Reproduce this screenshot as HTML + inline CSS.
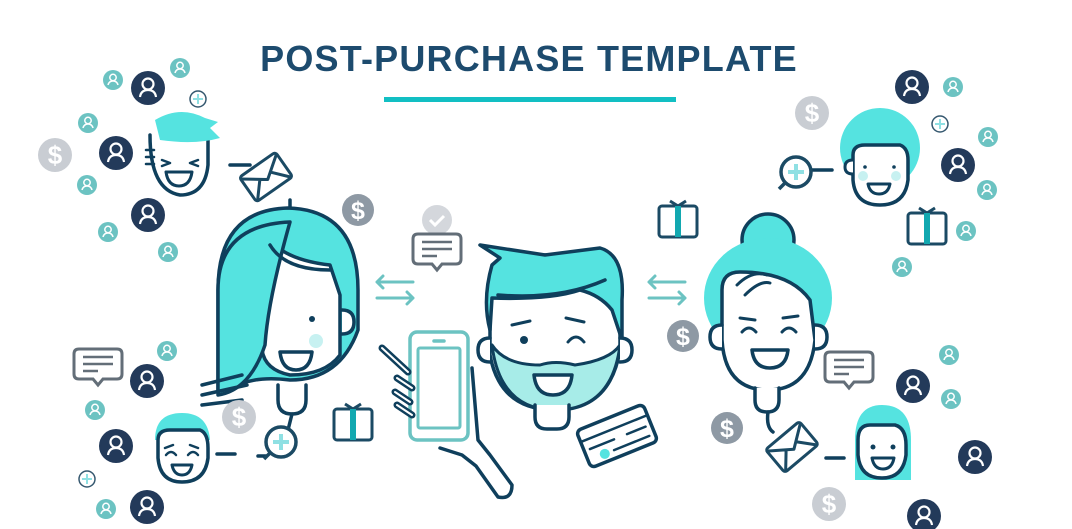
<!DOCTYPE html>
<html><head><meta charset="utf-8"><style>
html,body{margin:0;padding:0;background:#fff;width:1072px;height:529px;overflow:hidden}
.t{position:absolute;left:0;width:1058px;top:38px;text-align:center;font:bold 36px "Liberation Sans",sans-serif;color:#1d4b6e;letter-spacing:1.2px}
.u{position:absolute;left:384px;top:97px;width:292px;height:5px;background:#12bfc3}
svg{position:absolute;left:0;top:0}
</style></head><body>
<div class="t">POST-PURCHASE TEMPLATE</div><div class="u"></div>
<svg width="1072" height="529" viewBox="0 0 1072 529">
<defs>
<g id="du"><circle r="17" fill="#233a5a"/><circle cy="-4" r="5.5" fill="none" stroke="#fff" stroke-width="2.2"/><path d="M-8 9 Q-7 2 0 2 Q7 2 8 9" fill="none" stroke="#fff" stroke-width="2.2"/></g>
<g id="tu"><circle r="10" fill="#6cc3c2"/><circle cy="-2.5" r="3.2" fill="none" stroke="#fff" stroke-width="1.5"/><path d="M-5 5 Q-4 1 0 1 Q4 1 5 5" fill="none" stroke="#fff" stroke-width="1.5"/></g>
<g id="pl"><circle r="8" fill="#fff" stroke="#35586f" stroke-width="1.5"/><path d="M-5 0H5M0 -5V5" stroke="#8fe0e3" stroke-width="2"/></g>
<g id="dl"><circle r="17" fill="#c9cdd3"/><text y="9" text-anchor="middle" font-family="Liberation Sans" font-weight="bold" font-size="26" fill="#fff">$</text></g>
<g id="dd"><circle r="16" fill="#8e99a4"/><text y="9" text-anchor="middle" font-family="Liberation Sans" font-weight="bold" font-size="25" fill="#fff">$</text></g>
<g id="gf" fill="none" stroke="#1b4a64" stroke-width="3"><path d="M-8 -16 L0 -11 L8 -16" /><rect x="-19" y="-11" width="38" height="31" rx="3"/><rect x="-3" y="-11" width="6" height="31" fill="#12a8b0" stroke="none"/></g>
<g id="ch" fill="#fff" stroke="#636e78" stroke-width="3"><path d="M-19 -16H19Q24 -16 24 -11V9Q24 14 19 14H5L0 20L-5 14H-19Q-24 14 -24 9V-11Q-24 -16 -19 -16Z"/><path d="M-15 -8H15M-15 -1H15M-15 6H0" stroke-width="2.5"/></g>
<g id="ev" fill="#fff" stroke="#1b4a64" stroke-width="3" stroke-linejoin="round"><rect x="-22" y="-15" width="44" height="30" rx="3"/><path d="M-22 -13L0 3L22 -13M-20 14L-6 -2M20 14L6 -2"/></g>
<g id="ar" fill="none" stroke="#6cc3c2" stroke-width="3" stroke-linecap="round"><path d="M-18 -8H18M-18 -8L-12 -14M-18 -8L-12 -2M-18 8H18M18 8L12 2M18 8L12 14"/></g>
<g id="mg" fill="#fff" stroke="#1b4a64" stroke-width="3.5"><circle r="15"/><path d="M-10 10L-17 17"/><path d="M-8 0H8M0 -8V8" stroke="#8fe0e3" stroke-width="4"/></g>
</defs>
<g fill="none" stroke="#0f3f5c" stroke-width="3.5" stroke-linecap="round" stroke-linejoin="round">
<!-- top-left guy -->
<path d="M150 135 Q150 190 180 195 Q205 195 208 165 L208 130" fill="#fff"/>
<path d="M155 120 Q180 105 205 118 L218 122 L210 128 L220 138 Q195 145 160 140 Z" fill="#55e3e0" stroke="none"/>
<path d="M146 150h8M146 157h8M146 164h8" stroke-width="2.5"/>
<path d="M162 160l8 3-8 3M198 160l-8 3 8 3" stroke-width="2.5"/>
<path d="M166 172h26q-2 14 -13 14q-11 0 -13 -14z" stroke-width="3"/>
<path d="M230 165h20"/>
<!-- woman bob -->
<path d="M290 200 v12"/>
<path d="M218 290 Q218 210 288 208 Q358 210 358 290 V330 Q340 380 290 380 Q250 375 230 390 L218 390 Z" fill="#55e3e0"/>
<path d="M262 255 Q262 240 268 238 Q285 260 330 265 L340 295 V355 Q325 375 290 375 Q265 370 262 350 Z" fill="#fff"/>
<path d="M342 310 q12 0 12 12 q0 12 -12 12" fill="#fff"/>
<path d="M290 222 Q268 300 265 345 Q250 390 218 395 L218 290 Q218 225 290 222Z" fill="#55e3e0"/>
<path d="M270 245 Q285 270 330 270" />
<circle cx="312" cy="319" r="3" fill="#0f3f5c" stroke="none"/>
<circle cx="316" cy="341" r="7" fill="#c7f1f1" stroke="none"/>
<path d="M280 352h32q-2 18 -16 18q-14 0 -16 -18z" fill="#fff"/>
<path d="M202 385 l40 -10 M202 395 l45 -10 M202 405 l40 -5"/>
<path d="M278 385 v15 q0 14 14 14 q14 0 14 -14 v-15" fill="#fff"/>
<path d="M292 414 l-5 20"/>
<!-- bearded man arm -->
<path d="M472 368 L478 440 L490 455 L512 485 Q512 500 498 497 L476 466 L462 455 L440 448" fill="#fff"/>
<path d="M490 300 Q490 255 540 255 L590 255 Q620 260 620 300 V350 Q610 410 555 410 Q500 410 490 355 Z" fill="#fff"/>
<path d="M492 345 Q500 410 555 410 Q612 410 620 345 Q610 360 575 365 Q555 360 540 365 Q505 365 492 345Z" fill="#a7ece8" stroke-width="3"/>
<path d="M480 245 L545 255 L600 248 Q625 255 622 300 L622 340 L612 310 Q600 295 580 290 Q550 300 492 298 L490 330 Q482 300 492 265 L500 258 Z" fill="#55e3e0"/>
<path d="M498 295 Q560 300 605 280"/>
<path d="M490 338 q-12 0 -12 12 q0 12 12 12 M620 338 q12 0 12 12 q0 12 -12 12" fill="#fff"/>
<path d="M512 325 l18 -4 M566 318 l18 4" stroke-width="3"/>
<circle cx="524" cy="340" r="4" fill="#0f3f5c" stroke="none"/>
<path d="M568 342 q8 -10 16 0" stroke-width="3"/>
<path d="M534 375h38q-2 20 -19 20q-17 0 -19 -20z" fill="#fff"/>
<path d="M535 405 v12 q0 12 12 12 h10 q12 0 12 -12 v-12" fill="#fff"/>
<rect x="410" y="332" width="58" height="108" rx="7" fill="#fff" stroke="#6cc3c2"/>
<rect x="418" y="348" width="42" height="80" rx="2" fill="#fff" stroke="#6cc3c2" stroke-width="3"/>
<path d="M434 341h10" stroke="#6cc3c2"/>
<path d="M382 348 L408 372 M397 378 l15 10 M395 392 l15 10 M397 405 l15 10" stroke-width="7" stroke="#0f3f5c"/>
<path d="M382 348 L408 372 M397 378 l15 10 M395 392 l15 10 M397 405 l15 10" stroke-width="2" stroke="#fff"/>
<!-- credit card -->
<g transform="translate(617 436) rotate(-22)"><rect x="-36" y="-20" width="72" height="40" rx="5" fill="#fff"/><path d="M-36 -8H36M-30 2H-4M10 2H30M-8 12H30" stroke-width="2.5"/><circle cx="-18" cy="12" r="5" fill="#55e3e0" stroke="none"/></g>
<!-- bun woman -->
<circle cx="768" cy="240" r="26" fill="#55e3e0"/>
<ellipse cx="768" cy="298" rx="64" ry="60" fill="#55e3e0" stroke="none"/>
<path d="M722 290 Q722 272 740 272 Q790 272 810 300 L815 340 Q810 390 768 390 Q725 390 722 340 Z" fill="#fff"/>
<path d="M722 325 q-12 0 -12 12 q0 12 12 12 M815 325 q12 0 12 12 q0 12 -12 12" fill="#fff"/>
<path d="M737 285 q15 -15 30 -10 M745 295 q15 -15 25 -12" stroke-width="3"/>
<path d="M740 318 l15 2 M783 318 l15 -2 M742 332 q7 -8 14 0 M782 332 q7 -8 14 0" stroke-width="3"/>
<path d="M752 350h36q-2 18 -18 18q-16 0 -18 -18z" fill="#fff"/>
<path d="M755 388 v12 q0 12 12 12 q12 0 12 -12 v-12" fill="#fff"/>
<path d="M768 412 q-2 15 5 20"/>
<!-- top right -->
<circle cx="880" cy="148" r="40" fill="#55e3e0" stroke="none"/>
<path d="M853 155 Q853 145 865 145 L900 145 Q908 148 908 160 V180 Q905 205 880 205 Q855 205 853 180 Z" fill="#fff"/>
<path d="M853 160 q-8 0 -8 7 q0 7 8 7" fill="#fff" stroke-width="3"/>
<circle cx="863" cy="176" r="5" fill="#c7f1f1" stroke="none"/><circle cx="896" cy="176" r="5" fill="#c7f1f1" stroke="none"/>
<circle cx="865" cy="167" r="1.8" fill="#0f3f5c" stroke="none"/><circle cx="894" cy="167" r="1.8" fill="#0f3f5c" stroke="none"/>
<path d="M868 184h22q-2 10 -11 10q-9 0 -11 -10z" stroke-width="3"/>
<path d="M812 170 h20"/>
<!-- bottom right -->
<path d="M855 440 Q855 405 882 405 Q911 405 911 440 V480 H855Z" fill="#55e3e0" stroke="none"/>
<path d="M858 440 Q858 425 870 425 L895 425 Q906 428 906 445 V455 Q903 478 882 478 Q860 478 858 455Z" fill="#fff"/>
<circle cx="873" cy="447" r="2.5" fill="#0f3f5c" stroke="none"/><circle cx="893" cy="447" r="2.5" fill="#0f3f5c" stroke="none"/>
<path d="M872 458h22q-2 11 -11 11q-9 0 -11 -11z" stroke-width="3"/>
<path d="M826 458 h18"/>
<!-- bottom left -->
<path d="M155 440 Q155 413 182 413 Q208 413 210 440Z" fill="#55e3e0" stroke="none"/>
<path d="M158 440 Q158 430 170 430 L200 430 Q208 433 208 448 V458 Q205 482 182 482 Q160 482 158 458Z" fill="#fff"/>
<path d="M165 448 l8 -3 M198 448 l-8 -3 M166 455 q5 -6 10 0 M188 455 q5 -6 10 0" stroke-width="2.5"/>
<path d="M172 465h20q-2 10 -10 10q-8 0 -10 -10z" stroke-width="3"/>
<path d="M217 454 h18 M258 456 h8"/>
</g>
<use href="#ev" transform="translate(266 177) rotate(-35)"/>
<use href="#ev" transform="translate(792 447) rotate(-40)"/>
<use href="#mg" x="281" y="442"/>
<use href="#mg" x="796" y="172"/>
<use href="#ar" x="395" y="290"/><use href="#ar" x="667" y="290"/>
<circle cx="437" cy="220" r="15" fill="#c9cdd3" opacity=".8"/><path d="M430 220l5 5 9 -9" stroke="#fff" stroke-width="3" fill="none"/>
<use href="#ch" x="437" y="250"/><use href="#ch" x="98" y="365"/><use href="#ch" x="849" y="368"/>
<use href="#gf" x="678" y="217"/><use href="#gf" x="927" y="224"/><use href="#gf" x="353" y="420"/>
<use href="#dl" x="55" y="155"/><use href="#dd" x="358" y="210"/><use href="#dl" x="239" y="417"/><use href="#dd" x="683" y="336"/><use href="#dd" x="727" y="428"/><use href="#dl" x="812" y="113"/><use href="#dl" x="829" y="504"/>
<use href="#du" x="148" y="88"/><use href="#du" x="116" y="153"/><use href="#du" x="148" y="215"/><use href="#du" x="147" y="381"/><use href="#du" x="116" y="446"/><use href="#du" x="147" y="507"/>
<use href="#du" x="912" y="87"/><use href="#du" x="958" y="165"/><use href="#du" x="913" y="386"/><use href="#du" x="975" y="457"/><use href="#du" x="924" y="516"/>
<use href="#tu" x="113" y="80"/><use href="#tu" x="180" y="68"/><use href="#tu" x="88" y="123"/><use href="#tu" x="87" y="185"/><use href="#tu" x="108" y="232"/><use href="#tu" x="168" y="252"/><use href="#tu" x="167" y="351"/><use href="#tu" x="95" y="410"/><use href="#tu" x="106" y="509"/>
<use href="#tu" x="953" y="87"/><use href="#tu" x="988" y="137"/><use href="#tu" x="987" y="190"/><use href="#tu" x="966" y="231"/><use href="#tu" x="902" y="267"/><use href="#tu" x="949" y="355"/><use href="#tu" x="951" y="399"/>
<use href="#pl" x="198" y="99"/><use href="#pl" x="940" y="124"/><use href="#pl" x="87" y="479"/>
</svg>
</body></html>
